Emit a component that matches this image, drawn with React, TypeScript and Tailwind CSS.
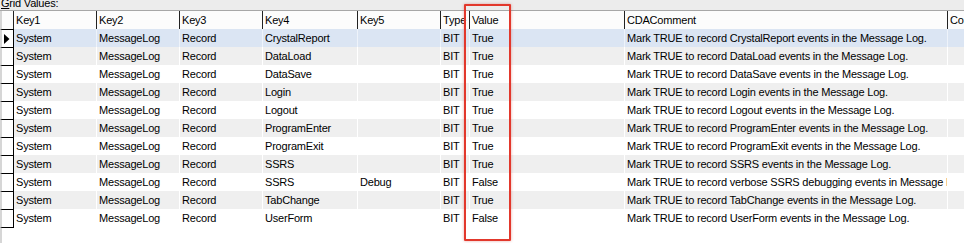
const columns = [
  { name: "Key1", w: "w-[83px]" },
  { name: "Key2", w: "w-[83px]" },
  { name: "Key3", w: "w-[83px]" },
  { name: "Key4", w: "w-[95px]" },
  { name: "Key5", w: "w-[83px]" },
  { name: "Type", w: "w-[29px]" },
  { name: "Value", w: "w-[155px]" },
  { name: "CDAComment", w: "w-[323px]" },
  { name: "Comment", w: "w-[40px]" },
];

const comment = (what: string) => `Mark TRUE to record ${what} events in the Message Log.`;

const rows: string[][] = [
  ["CrystalReport", "", "True", comment("CrystalReport")],
  ["DataLoad", "", "True", comment("DataLoad")],
  ["DataSave", "", "True", comment("DataSave")],
  ["Login", "", "True", comment("Login")],
  ["Logout", "", "True", comment("Logout")],
  ["ProgramEnter", "", "True", comment("ProgramEnter")],
  ["ProgramExit", "", "True", comment("ProgramExit")],
  ["SSRS", "", "True", comment("SSRS")],
  ["SSRS", "Debug", "False", "Mark TRUE to record verbose SSRS debugging events in Message Log."],
  ["TabChange", "", "True", comment("TabChange")],
  ["UserForm", "", "False", comment("UserForm")],
];

function RowHeader({ selected, last }: { selected: boolean; last: boolean }) {
  return (
    <div
      className={`flex h-full w-[14px] shrink-0 items-center border-l-2 border-r border-t border-l-[#d6d6d6] border-r-black border-t-black bg-white pl-[2px] ${
        last ? "border-b" : ""
      } border-b-black`}
    >
      {selected && (
        <svg width="6" height="10" viewBox="0 0 6 10">
          <polygon points="0,0 5.5,5 0,10" fill="#000" />
        </svg>
      )}
    </div>
  );
}

export default function App() {
  return (
    <div className="relative h-[243px] w-[964px] overflow-hidden bg-[#ececec] font-['Liberation_Sans',Tahoma,sans-serif] text-[11px] tracking-[-0.2px] text-black">
      <div className="h-[10px] overflow-hidden">
        <div className="-mt-[3px] pl-[1px] leading-[13px]">
          <span className="underline">G</span>rid Values:
        </div>
      </div>

      <div className="flex h-[233px] flex-col border-t border-[#a7a7a7] bg-white">
        <div className="flex h-[18px] shrink-0 bg-[#fcfcfc]">
          <div className="w-[13px] shrink-0 border-l-2 border-[#d6d6d6]" />
          {columns.map((c) => (
            <div
              key={c.name}
              className={`${c.w} shrink-0 overflow-hidden whitespace-nowrap border-l border-[#222] pl-[2px] leading-[19px]`}
            >
              {c.name}
            </div>
          ))}
        </div>

        {rows.map((r, i) => {
          const bg = i === 0 ? "bg-[#dbe5f3]" : i % 2 === 1 ? "bg-[#efefef]" : "bg-white";
          const cells = ["System", "MessageLog", "Record", r[0], r[1], "BIT", r[2], r[3], ""];
          return (
            <div key={i} className={`flex shrink-0 ${i === rows.length - 1 ? "h-[19px]" : "h-[18px]"}`}>
              <RowHeader selected={i === 0} last={i === rows.length - 1} />
              <div className={`flex flex-1 ${bg} ${i === rows.length - 1 ? "h-[18px]" : ""}`}>
                {cells.map((v, j) => (
                  <div
                    key={j}
                    className={`${j === 0 ? "w-[82px]" : columns[j].w} shrink-0 overflow-hidden whitespace-nowrap pl-[2px] leading-[19px] ${
                      j === 0 ? "" : i === 0 ? "border-l border-[#eef3fa]" : "border-l border-white"
                    }`}
                  >
                    {v}
                  </div>
                ))}
              </div>
            </div>
          );
        })}
        <div className="flex-1 border-l-2 border-[#d6d6d6]" />
      </div>

      <div className="pointer-events-none absolute left-[464px] top-[4px] h-[237px] w-[47px] rounded-[1px] border-2 border-[#e2382c] shadow-[0_0_3px_rgba(200,60,50,0.45)]" />
    </div>
  );
}
